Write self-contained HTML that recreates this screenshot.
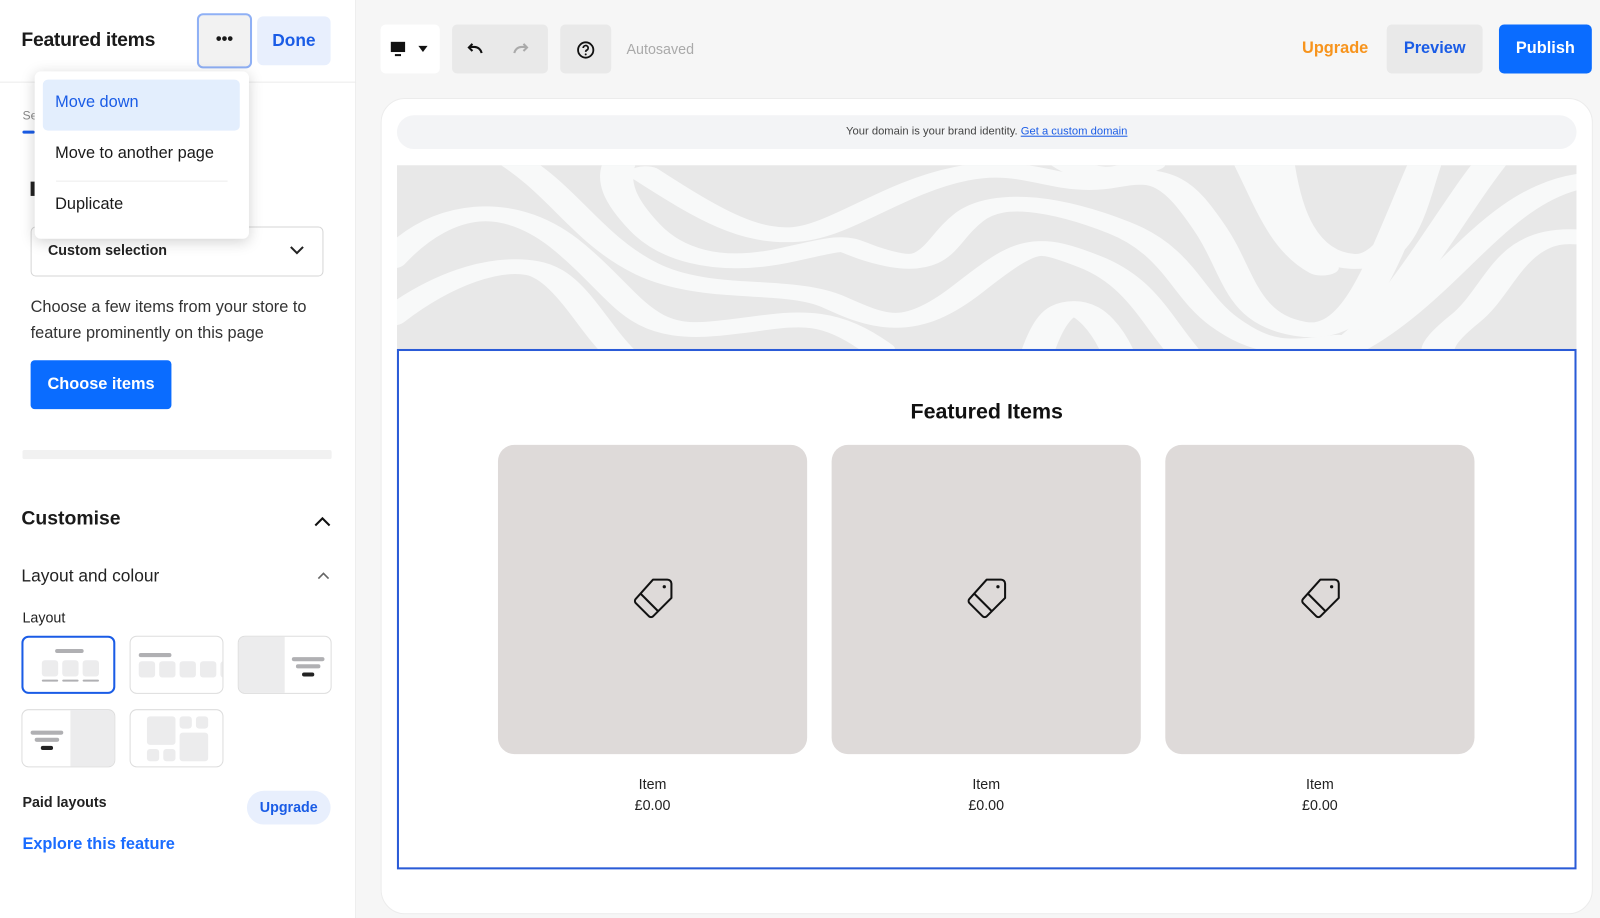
<!DOCTYPE html>
<html><head><meta charset="utf-8"><style>
*{box-sizing:border-box;margin:0;padding:0}
body{width:1600px;height:874px;overflow:hidden;background:#f6f6f6;font-family:"Liberation Sans",sans-serif;color:#1a1a1a;position:relative}
#wrap{position:absolute;left:0;top:0;width:1568px;height:857px;transform:scale(1.0204);transform-origin:0 0}
.abs{position:absolute}
#left{left:0;top:0;width:349px;height:900px;background:#fff;border-right:1px solid #ececec}
.tile{position:absolute;width:92px;height:57px;border:1.5px solid #ddd;border-radius:7px;background:#fff;overflow:hidden}
.bar{position:absolute;background:#b0b0b3;border-radius:2px;height:4px}
.blk{position:absolute;background:#ececed;border-radius:3px}
.card{position:absolute;top:436px;width:303px;height:303px;background:#dedad9;border-radius:16px}
.cap{position:absolute;top:758px;width:303px;text-align:center;font-size:14px;line-height:21px;color:#222}
</style></head><body><div id="wrap">
<div id="left" class="abs">
  <div class="abs" style="left:0;top:80px;width:349px;height:1px;background:#ececec"></div>
  <div class="abs" style="left:21px;top:29px;font-size:19px;font-weight:bold;letter-spacing:-0.3px">Featured items</div>
  <div class="abs" style="left:193px;top:13px;width:54px;height:54px;border:2px solid #8fb0f5;border-radius:6px;background:#f2f2f2;text-align:center;line-height:48px;font-weight:bold;font-size:16px">•••</div>
  <div class="abs" style="left:252px;top:16px;width:72px;height:48px;border-radius:6px;background:#e8effd;color:#1a5ce6;font-size:17px;font-weight:bold;text-align:center;line-height:48px">Done</div>
  <div class="abs" style="left:22px;top:106px;font-size:12px;color:#888">Se</div>
  <div class="abs" style="left:22px;top:128px;width:12px;height:3px;background:#1a5ce6;border-radius:2px"></div>
  <div class="abs" style="left:30px;top:178px;width:4px;height:14px;background:#222"></div>
  <div class="abs" style="left:30px;top:222px;width:287px;height:49px;border:1px solid #d6d6d6;border-radius:5px"></div>
  <div class="abs" style="left:47px;top:237px;font-size:14px;font-weight:bold;color:#222">Custom selection</div>
  <svg class="abs" style="left:283px;top:239px" width="16" height="12"><path d="M2 3l6 6 6-6" fill="none" stroke="#222" stroke-width="2"/></svg>
  <div class="abs" style="left:30px;top:289px;font-size:16px;line-height:25px;color:#333">Choose a few items from your store to<br>feature prominently on this page</div>
  <div class="abs" style="left:30px;top:353px;width:138px;height:48px;background:#0a6cff;border-radius:4px;color:#fff;font-weight:bold;font-size:16px;text-align:center;line-height:48px">Choose items</div>
  <div class="abs" style="left:22px;top:441px;width:303px;height:9px;background:#f1f1f1;border-radius:2px"></div>
  <div class="abs" style="left:21px;top:498px;font-size:19px;font-weight:bold">Customise</div>
  <svg class="abs" style="left:307px;top:505px" width="18" height="12"><path d="M2 10l7-7 7 7" fill="none" stroke="#111" stroke-width="2"/></svg>
  <div class="abs" style="left:21px;top:555px;font-size:17px;color:#222">Layout and colour</div>
  <svg class="abs" style="left:311px;top:560px" width="12" height="9"><path d="M1 7l5-5 5 5" fill="none" stroke="#666" stroke-width="1.6"/></svg>
  <div class="abs" style="left:22px;top:597px;font-size:14px;color:#222">Layout</div>
  <div class="tile" style="left:21px;top:623px;border:2px solid #1a5ce6">
    <div class="bar" style="left:31px;top:11px;width:28px"></div>
    <div class="blk" style="left:18px;top:22px;width:16px;height:16px"></div><div class="blk" style="left:38px;top:22px;width:16px;height:16px"></div><div class="blk" style="left:58px;top:22px;width:16px;height:16px"></div>
    <div class="bar" style="left:18px;top:41px;width:16px;height:2px"></div><div class="bar" style="left:38px;top:41px;width:16px;height:2px"></div><div class="bar" style="left:58px;top:41px;width:16px;height:2px"></div>
  </div>
  <div class="tile" style="left:127px;top:623px">
    <div class="bar" style="left:8px;top:16px;width:32px"></div>
    <div class="blk" style="left:8px;top:24px;width:16px;height:16px"></div><div class="blk" style="left:28px;top:24px;width:16px;height:16px"></div><div class="blk" style="left:48px;top:24px;width:16px;height:16px"></div><div class="blk" style="left:68px;top:24px;width:16px;height:16px"></div><div class="blk" style="left:88px;top:24px;width:16px;height:16px"></div>
  </div>
  <div class="tile" style="left:233px;top:623px">
    <div class="blk" style="left:0;top:0;width:45px;height:57px;border-radius:0"></div>
    <div class="bar" style="left:52px;top:20px;width:32px"></div><div class="bar" style="left:56px;top:27px;width:24px"></div>
    <div class="bar" style="left:62px;top:35px;width:12px;background:#222"></div>
  </div>
  <div class="tile" style="left:21px;top:695px">
    <div class="blk" style="left:47px;top:0;width:45px;height:57px;border-radius:0"></div>
    <div class="bar" style="left:8px;top:20px;width:32px"></div><div class="bar" style="left:12px;top:27px;width:24px"></div>
    <div class="bar" style="left:18px;top:35px;width:12px;background:#222"></div>
  </div>
  <div class="tile" style="left:127px;top:695px">
    <div class="blk" style="left:16px;top:6px;width:28px;height:28px"></div>
    <div class="blk" style="left:48px;top:6px;width:12px;height:12px"></div><div class="blk" style="left:64px;top:6px;width:12px;height:12px"></div>
    <div class="blk" style="left:48px;top:22px;width:28px;height:28px"></div>
    <div class="blk" style="left:16px;top:38px;width:12px;height:12px"></div><div class="blk" style="left:32px;top:38px;width:12px;height:12px"></div>
  </div>
  <div class="abs" style="left:22px;top:778px;font-size:14px;font-weight:bold;color:#222">Paid layouts</div>
  <div class="abs" style="left:242px;top:775px;width:82px;height:33px;background:#e8effd;border-radius:17px;color:#1a5ce6;font-weight:bold;font-size:14px;text-align:center;line-height:33px">Upgrade</div>
  <div class="abs" style="left:22px;top:819px;font-size:16px;font-weight:bold;color:#1a6cff">Explore this feature</div>
</div>
<div class="abs" style="left:34px;top:70px;width:210px;height:164px;background:#fff;border-radius:6px;box-shadow:0 3px 14px rgba(0,0,0,.18)">
  <div class="abs" style="left:8px;top:8px;width:193px;height:50px;background:#e3eefd;border-radius:5px"></div>
  <div class="abs" style="left:20px;top:22px;font-size:16px;color:#1a5ce6">Move down</div>
  <div class="abs" style="left:20px;top:72px;font-size:16px">Move to another page</div>
  <div class="abs" style="left:21px;top:107px;width:168px;height:1px;background:#ececec"></div>
  <div class="abs" style="left:20px;top:122px;font-size:16px">Duplicate</div>
</div>
<div class="abs" style="left:373px;top:24px;width:58px;height:48px;background:#fff;border-radius:5px"></div>
<svg class="abs" style="left:382px;top:40px" width="40" height="18"><rect x="1" y="1" width="14" height="10" fill="#111"/><rect x="5" y="13" width="6" height="2" fill="#111"/><path d="M28 5h9l-4.5 6z" fill="#111"/></svg>
<div class="abs" style="left:443px;top:24px;width:94px;height:48px;background:#e9e9e9;border-radius:5px"></div>
<svg class="abs" style="left:456px;top:40px" width="70" height="16"><path d="M16 12c-1-4-4-6-7-6H4M7 3L3.5 6.5 7 10" fill="none" stroke="#111" stroke-width="2"/><path d="M48 12c1-4 4-6 7-6h5M57 3l3.5 3.5L57 10" fill="none" stroke="#aaa" stroke-width="2"/></svg>
<div class="abs" style="left:549px;top:24px;width:50px;height:48px;background:#e9e9e9;border-radius:5px"></div>
<svg class="abs" style="left:564px;top:39px" width="20" height="20"><circle cx="10" cy="10" r="7.5" fill="none" stroke="#111" stroke-width="1.8"/><path d="M7.6 8a2.4 2.4 0 1 1 3.4 2.2c-.8.4-1 .9-1 1.6" fill="none" stroke="#111" stroke-width="1.7"/><circle cx="10" cy="14.3" r="1" fill="#111"/></svg>
<div class="abs" style="left:614px;top:40px;font-size:14px;color:#aaa">Autosaved</div>
<div class="abs" style="left:1276px;top:39px;font-size:16px;font-weight:bold;color:#f7941d">Upgrade</div>
<div class="abs" style="left:1359px;top:24px;width:94px;height:48px;background:#e9e9e9;border-radius:5px;color:#1a5ce6;font-weight:bold;font-size:16px;text-align:center;line-height:48px">Preview</div>
<div class="abs" style="left:1469px;top:24px;width:91px;height:48px;background:#0a6cff;border-radius:5px;color:#fff;font-weight:bold;font-size:16px;text-align:center;line-height:48px">Publish</div>
<div class="abs" style="left:373px;top:96px;width:1188px;height:800px;background:#fff;border-radius:24px;border:1px solid #ececec"></div>
<div class="abs" style="left:389px;top:113px;width:1156px;height:33px;background:#f3f4f6;border-radius:17px;text-align:center;font-size:11px;line-height:33px;color:#444">Your domain is your brand identity. <span style="color:#1a5ce6;text-decoration:underline">Get a custom domain</span></div>
<svg class="abs" style="left:389px;top:162px" width="1156" height="180" viewBox="0 15 1568 545" preserveAspectRatio="none">
<rect x="0" y="0" width="1568" height="600" fill="#e8e8e8"/>
<g fill="none" stroke="#f8f9f9" stroke-width="44" stroke-linecap="round">
<path d="M-10 300C60 130 150 110 230 260S320 520 420 500S560 430 640 560"/>
<path d="M-10 470C60 350 130 300 180 320S260 500 300 580"/>
<path d="M140 -20C220 80 250 230 330 320S520 360 580 420S680 520 760 380S850 240 920 300S1010 480 1050 580"/>
<path d="M300 -10C280 60 300 130 330 200S420 330 520 280S580 250 650 290S720 240 760 170S880 130 960 200S1050 400 1100 480S1180 560 1250 540"/>
<path d="M330 40C420 170 470 230 530 220S660 80 750 40S880 90 950 60S1040 70 1080 200S1120 470 1200 500S1300 350 1370 -10"/>
<path d="M1170 -10C1180 150 1200 290 1270 300S1350 100 1370 -10"/>
<path d="M1460 -10C1400 150 1320 500 1240 580"/>
<path d="M1580 60C1480 90 1420 300 1330 460S1200 600 1150 600"/>
<path d="M1580 230C1480 200 1470 380 1420 470S1380 580 1400 600"/>
<path d="M850 580C865 480 880 440 900 440S945 500 960 580"/>
<path d="M880 -10C920 60 960 50 1000 10"/>
<path d="M1130 -10C1160 120 1180 260 1230 320"/>
</g></svg>
<div class="abs" style="left:389px;top:342px;width:1156px;height:510px;border:2px solid #2a5bd7"></div>
<div class="abs" style="left:389px;top:392px;width:1156px;text-align:center;font-size:21px;font-weight:bold;color:#111">Featured Items</div>
<div class="card" style="left:488px"></div><div class="card" style="left:815px"></div><div class="card" style="left:1142px"></div>
<svg class="abs" style="left:618px;top:564px" width="46" height="46"><g fill="none" stroke="#111" stroke-width="2" stroke-linejoin="round"><path d="M22 4h14a4 4 0 0 1 4 4v14L22 40a3 3 0 0 1-4 0L5 27a3 3 0 0 1 0-4z"/><path d="M10 18l17 17"/></g><circle cx="33" cy="11" r="1.6" fill="#111"/></svg>
<svg class="abs" style="left:945px;top:564px" width="46" height="46"><g fill="none" stroke="#111" stroke-width="2" stroke-linejoin="round"><path d="M22 4h14a4 4 0 0 1 4 4v14L22 40a3 3 0 0 1-4 0L5 27a3 3 0 0 1 0-4z"/><path d="M10 18l17 17"/></g><circle cx="33" cy="11" r="1.6" fill="#111"/></svg>
<svg class="abs" style="left:1272px;top:564px" width="46" height="46"><g fill="none" stroke="#111" stroke-width="2" stroke-linejoin="round"><path d="M22 4h14a4 4 0 0 1 4 4v14L22 40a3 3 0 0 1-4 0L5 27a3 3 0 0 1 0-4z"/><path d="M10 18l17 17"/></g><circle cx="33" cy="11" r="1.6" fill="#111"/></svg>
<div class="cap" style="left:488px">Item<br>£0.00</div>
<div class="cap" style="left:815px">Item<br>£0.00</div>
<div class="cap" style="left:1142px">Item<br>£0.00</div>
</div></body></html>
